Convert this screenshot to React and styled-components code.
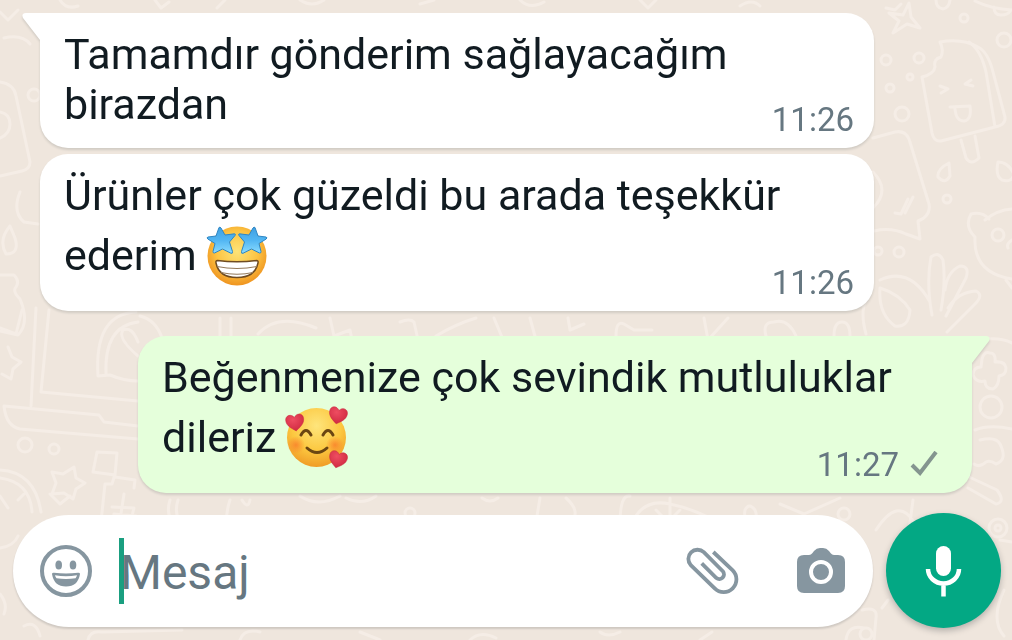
import React, { useState } from 'react'
import styled, { createGlobalStyle } from 'styled-components'

const GlobalStyle = createGlobalStyle`
  * {
    box-sizing: border-box;
  }
  body {
    margin: 0;
    background: #efe6dd;
    font-family: Roboto, 'Liberation Sans', sans-serif;
    color: #111b21;
  }
`

const Page = styled.div`
  position: relative;
  isolation: isolate;
  min-height: 100vh;
  display: flex;
  flex-direction: column;
  justify-content: space-between;
  overflow: hidden;
`

const WallpaperSvg = styled.svg`
  position: absolute;
  inset: 0;
  z-index: -1;
  width: 100%;
  height: 100%;
  fill: none;
  stroke: #f5ede6;
  stroke-width: 3;
  stroke-linecap: round;
  stroke-linejoin: round;
`

const MessageList = styled.main`
  display: flex;
  flex-direction: column;
  gap: 6px;
  padding: 13px 40px 20px;
`

const Bubble = styled.article`
  position: relative;
  display: grid;
  padding: 16px 20px 12px 24px;
  border-radius: 28px;
  filter: drop-shadow(0 2px 1px rgba(11, 20, 26, 0.13));
  ${({ $out, $tail }) =>
    $out
      ? `
    background: #e5ffdb;
    color: #e5ffdb;
    margin: 19px 0 0 98px;
    padding-right: 34px;
    ${$tail ? 'border-top-right-radius: 0;' : ''}
  `
      : `
    background: #ffffff;
    color: #ffffff;
    margin-right: 98px;
    ${$tail ? 'border-top-left-radius: 0;' : ''}
  `}
`

const Tail = styled.svg`
  position: absolute;
  top: 0;
  width: 20px;
  height: 28px;
  fill: currentColor;
  ${({ $out }) => ($out ? 'right: -18px; transform: scaleX(-1);' : 'left: -18px;')}
`

const Text = styled.p`
  grid-area: 1 / 1;
  margin: 0 0 7px;
  font-size: 43px;
  line-height: 50px;
  color: #111b21;
`

const Meta = styled.footer`
  grid-area: 1 / 1;
  place-self: end;
  display: flex;
  align-items: center;
  gap: 11px;
  font-size: 33px;
  line-height: 32px;
  color: #667781;
`

const Emoji = styled.svg`
  width: 60px;
  height: 60px;
  margin: 6px 0;
  vertical-align: -22px;
  overflow: visible;
`

const Composer = styled.form`
  display: flex;
  align-items: center;
  gap: 13px;
  padding: 0 11px 12px 13px;
`

const InputPill = styled.div`
  flex: 1;
  min-width: 0;
  height: 112px;
  display: flex;
  align-items: center;
  padding: 0 27px 0 26px;
  border-radius: 56px;
  background: #ffffff;
  box-shadow: 0 2px 2px rgba(11, 20, 26, 0.14);
`

const IconButton = styled.button`
  flex: none;
  display: flex;
  padding: 0;
  border: 0;
  background: none;
  color: #8696a0;
  cursor: pointer;
  & + & {
    margin-left: 56px;
  }
`

const Caret = styled.span`
  flex: none;
  width: 5px;
  height: 66px;
  margin: 0 -4px 0 26px;
  background: #1a9f80;
`

const MessageInput = styled.input`
  flex: 1;
  min-width: 0;
  padding: 4px 0 0;
  border: 0;
  outline: 0;
  background: none;
  font-family: inherit;
  font-size: 48px;
  line-height: 60px;
  color: #111b21;
  &::placeholder {
    color: #667781;
    opacity: 1;
  }
`

const MicButton = styled.button`
  flex: none;
  width: 115px;
  height: 115px;
  display: grid;
  place-items: center;
  padding: 0;
  border: 0;
  border-radius: 50%;
  background: #03a884;
  color: #ffffff;
  box-shadow: 0 3px 6px rgba(11, 20, 26, 0.25);
  cursor: pointer;
`

const Wallpaper = () => (
  <WallpaperSvg viewBox="0 0 1012 640" preserveAspectRatio="xMidYMid slice" aria-hidden="true">
    {/* top edge */}
    <path d="M0 12l8 8 10-10M4 38q18-4 26 6M60 0q6 10 18 6M155 0l6 8 8-6M225 0l-8 8M300 0q12 8 24 0M420 4l14-4M520 0q10 10 24 2M640 0l8 8 8-8M740 6q12-8 20 0" />
    <path d="M886 8l9 2 6-6M893 33l6-12-10-8 14 2 6-12 2 14 9 11-13-4zM936 0q0 8 7 9 6-1 7-9M975 1q16 8 37 9M994 7q0 8 7 8t9-4" />
    <circle cx="964" cy="18" r="4" />
    <circle cx="1004" cy="40" r="7" />
    <circle cx="886" cy="60" r="5" />
    <circle cx="919" cy="58" r="5" />
    <circle cx="910" cy="77" r="3" />
    <circle cx="890" cy="88" r="4" />
    <circle cx="902" cy="114" r="7" />
    {/* ice lolly */}
    <path d="M940 42q22-4 38 5 10 5 15 25l12 45q1 8-10 10l-54 14q-7 1-9-8l-10-56q12-3 13-10-2-8 6-10 3-7-1-15zM969 42q12 8 17 30l9 55M961 140l5 18q5 8 13 0l-4-22" />
    <path d="M940 86l8 3-7 4M971 80l-6 4 8 2M950 107l20-1q2 14-6 15-8 0-9-12" />
    {/* speech card */}
    <path d="M873 138l22-6q10-2 14 7l20 65q2 12-11 17l2 18-14-5q-15-7-32-3M873 172q18 18 0 36M895 213l6 1 7-15M905 213l8-16" />
    <path d="M949 163q-12 6-11 14 7 8 12-1zM998 162q-3 14 4 18 10 3 12-6-6-12-16-12z" />
    <circle cx="947" cy="199" r="4" />
    <circle cx="899" cy="252" r="5" />
    <circle cx="878" cy="251" r="4" />
    {/* bear */}
    <path d="M989 219q-7-8-18-5-7 12 4 23-2 36 37 42M985 220q12-10 27-11M1006 280l6 8M1012 240q-6 4-4 8" />
    <circle cx="998" cy="235" r="6" />
    {/* leaves */}
    <path d="M932 315q-6-32-1-58 8-6 12 3 3 22-2 50M945 290q2-18 15-24 10 0 6 12l-20 38M948 308q10-16 28-17 8 4-1 13l-28 28M880 280q30-14 50 22M880 288q-2 26 15 38 14 2 15-16-10-16-30-22zM866 300q-6 12 0 34" />
    {/* left side */}
    <path d="M0 82q14 2 16 14l14 66q0 7-8 9l-22 5M0 112q10 2 10 12t-10 14M20 192q-8 20 4 30l14 2M10 226q-12 14-4 28 14 0 9-16zM0 275h14q6 6 2 12-4 4 4 12 10 24-2 36l-18-4" />
    <circle cx="34" cy="95" r="6" />
    <path d="M8 347l4 10 9 5-8 7-2 10-9-5M22 310l-6 24-16-6M36 308l-5 98M49 310l-8 82 97 9M4 406l95 9 5 7 34 4M4 406q2 20 16 23l118 10" />
    <path d="M98 376q-4-62 38-64M106 374q-2-48 32-52M98 376l12-1q14 6 28 6M138 342q-6-16-15-12-6 8 15 26" />
    <circle cx="25" cy="445" r="7" />
    <circle cx="54" cy="449" r="5" />
    <path d="M74 467l2 11 9 5-9 6-3 10-9-6-12 1 4-11-4-11 11 2zM97 452l20 1-2 22-22-3zM115 474l-3 10h-7l-4 38M115 477l20 3-1 8M112 507l22 1-3 12" />
    <path d="M0 470q35 2 41 42M0 478q30 4 32 34M0 496l8 12M18 500l6-6" />
    {/* strip between the bubbles */}
    <path d="M220 318v20M231 318v20M258 334q20-22 58-6M330 318l4 18 16-6 2 10M400 322q10-4 14 0l4 18M436 336q20-12 40-18M494 318l10 24M530 318l6 22M568 318l2 12 14-6M616 336q0-16 8-12l10 6h18M704 318l4 22 20-22M766 336q-4-14 8-14 14-4 22 14M834 336q0-14 8-14t8 14" />
    <path d="M140 316q16 4 22 22" />
    {/* right of the outgoing bubble */}
    <path d="M988 339q14-1 24 4M982 359q2-8 8-6 6 0 5 9 10-1 11 6 0 7-7 8 0 10-6 13-8 0-8-8-9 2-12-6 0-8 8-8zM975 430q14-6 37-1M980 440q16-4 20 4 8 16-4 20-6-4-10-2-6 6-12 2M968 488l28 16q10-2 1-14l-30-14" />
    <circle cx="991" cy="407" r="11" />
    {/* strip above the composer */}
    <path d="M50 494l10 10 10-8M124 494l-4 26M112 526l2-12 22 2-2 10M170 500q-4 12 2 24M178 500q-4 12 2 24M230 500q-4 12-4 26M300 496q18 12 40 0M346 498q16 8 30-2M242 500q6 10 8 0M482 498q8 6 16 0M540 498l-4 24M566 498q16 14 4 26M620 524q0-30 10-28M632 524q10-26 38-20t50 20M670 526v-28M656 510l12 12 12-12M745 510q4-8 10 0 4 10-4 10-8 0-6-10zM780 504l24 10 36-16M876 530q22-34 38-8M913 500l-4 30" />
    <circle cx="410" cy="513" r="5" />
    <circle cx="844" cy="514" r="6" />
    {/* around and below the composer */}
    <path d="M0 548q14-2 18-12M0 594q8 10 4 20M24 626q12-6 16 10M88 640q2-10 14-8l80-2M240 640q4-12 20-8M360 632l20 8M470 640q10-10 26-2M600 632q8 6 20 0M700 640l12-8M862 610q16-4 14 8l-2 22M846 640q2-16 18-12M888 600l-6 8M1000 540l12 2M1004 590q-14 30 0 46" />
    <circle cx="998" cy="528" r="9" />
    <circle cx="998" cy="528" r="3" />
    <circle cx="866" cy="634" r="6" />
  </WallpaperSvg>
)

const Star = () => (
  <path
    d="M12 1.5Q13 .6 14 2l4 7 9.500-1.200Q29 8 28 9.500L22.500 16l3 9.500Q25.800 28 24 27.300L15.500 23 7.500 27Q5.800 27.300 6 25.500L8 17.500.8 13Q-.8 11.600 1 11l8-1z"
    fill="url(#starFill)"
    stroke="#2e86c4"
    strokeWidth="1"
    strokeLinejoin="round"
  />
)

const StarStruck = () => (
  <Emoji viewBox="0 0 60 60" role="img" aria-label="🤩">
    <defs>
      <radialGradient id="struckFace" cx="50%" cy="42%" r="58%">
        <stop offset="0" stopColor="#fde378" />
        <stop offset="0.6" stopColor="#fcc443" />
        <stop offset="1" stopColor="#ef9420" />
      </radialGradient>
      <linearGradient id="starFill" x1="0" y1="0" x2="0" y2="1">
        <stop offset="0" stopColor="#3f9fe0" />
        <stop offset="0.5" stopColor="#52b6f3" />
        <stop offset="1" stopColor="#8bdcff" />
      </linearGradient>
    </defs>
    <circle cx="30" cy="30" r="29.500" fill="url(#struckFace)" />
    <Star />
    <g transform="translate(60 0) scale(-1 1)">
      <Star />
    </g>
    <path
      d="M10.500 34.500Q30 37 49.500 34.500q2 0 1.500 2.500Q48 51.500 30 51.500T9 37q-.5-2.500 1.500-2.500z"
      fill="#fff"
      stroke="#6e4b22"
      strokeWidth="1.500"
    />
    <path d="M10 40.500Q30 44.500 50 40.500M14 46.500Q30 50 46 46.500" fill="none" stroke="#93795a" strokeWidth="1" />
  </Emoji>
)

const Heart = ({ x, y, angle }) => (
  <path
    transform={`translate(${x} ${y}) rotate(${angle})`}
    d="M0 9C-4 6-9 3-9-2.500-9-8-2.500-9 0-4.500 2.500-9 9-8 9-2.500 9 3 4 6 0 9z"
    fill="url(#heartFill)"
    stroke="#c9283f"
    strokeWidth="0.500"
  />
)

const SmilingHearts = () => (
  <Emoji viewBox="0 0 60 60" role="img" aria-label="🥰">
    <defs>
      <radialGradient id="loveFace" cx="50%" cy="30%" r="70%">
        <stop offset="0" stopColor="#fee57c" />
        <stop offset="0.600" stopColor="#fcc840" />
        <stop offset="1" stopColor="#f09c26" />
      </radialGradient>
      <radialGradient id="cheek">
        <stop offset="0" stopColor="#f9812c" stopOpacity="0.850" />
        <stop offset="1" stopColor="#f9812c" stopOpacity="0" />
      </radialGradient>
      <radialGradient id="heartFill" cx="40%" cy="30%" r="75%">
        <stop offset="0" stopColor="#ee4d61" />
        <stop offset="1" stopColor="#cf2840" />
      </radialGradient>
    </defs>
    <circle cx="29.500" cy="29.500" r="29.500" fill="url(#loveFace)" />
    <circle cx="9" cy="37" r="9" fill="url(#cheek)" />
    <circle cx="48" cy="37" r="9" fill="url(#cheek)" />
    <g fill="none" stroke="#6b4612" strokeLinecap="round">
      <path d="M14 27Q19 18 24 27M36 27Q41 18 46 27" strokeWidth="3" />
      <path d="M20 40Q30 49 40 40" strokeWidth="3" />
    </g>
    <Heart x={8} y={14} angle={-8} />
    <Heart x={51} y={7} angle={12} />
    <Heart x={51} y={51} angle={14} />
  </Emoji>
)

const SmileyIcon = () => (
  <svg width="54" height="54" viewBox="0 0 54 54" fill="currentColor" aria-hidden="true">
    <circle cx="27" cy="27" r="24" fill="none" stroke="currentColor" strokeWidth="4" />
    <ellipse cx="19.700" cy="21" rx="3.300" ry="4.500" />
    <ellipse cx="34" cy="21" rx="3.300" ry="4.500" />
    <path d="M13 30q0-1.500 2-1.300 12 1.600 24 0 2-.2 2 1.300Q39 42.500 27 42.500T13 30z" />
    <path d="M16 31.300q11 2 22 0-.3 1.700-1.500 3-9.500 1.600-19 0-1.200-1.300-1.500-3z" fill="#fff" />
  </svg>
)

const ClipIcon = () => (
  <svg width="54" height="50" viewBox="0 0 54 50" aria-hidden="true">
    <path
      d="M27.300 6L46.700 24.300A12.700 12.700 0 0 1 28.700 42.300L4.800 19.200A9.200 9.200 0 0 1 17.800 6.200L37 25.400A4.700 4.700 0 0 1 30.400 32L15.700 17.300"
      fill="none"
      stroke="currentColor"
      strokeWidth="3.800"
    />
  </svg>
)

const CameraIcon = () => (
  <svg width="50" height="48" viewBox="0 0 50 48" aria-hidden="true">
    <path
      d="M8 8h5q2 0 3.500-2l1.500-2q2.500-3 6-3h3q3.500 0 6 3l1.500 2q1.500 2 3.500 2h4q7 0 7 7v24q0 7-7 7H8q-7 0-7-7V15q0-7 7-7z"
      fill="currentColor"
    />
    <circle cx="25" cy="25" r="10" fill="none" stroke="#fff" strokeWidth="4" />
  </svg>
)

const MicIcon = () => (
  <svg width="42" height="52" viewBox="0 0 42 52" fill="none" stroke="currentColor" aria-hidden="true">
    <rect x="13" y="1" width="15" height="30" rx="7.500" fill="currentColor" stroke="none" />
    <path d="M5 24a15.500 14.500 0 0 0 31 0M20.500 38v13.500" strokeWidth="4.500" />
  </svg>
)

const CheckIcon = () => (
  <svg width="28" height="28" viewBox="0 0 28 28" role="img" aria-label="Gönderildi">
    <path d="M2 14l8 8L26 1" fill="none" stroke="#84958f" strokeWidth="4" />
  </svg>
)

const messages = [
  { text: 'Tamamdır gönderim sağlayacağım birazdan', time: '11:26', tail: true },
  { text: 'Ürünler çok güzeldi bu arada teşekkür ederim ', emoji: <StarStruck />, time: '11:26' },
  {
    text: 'Beğenmenize çok sevindik mutluluklar dileriz ',
    emoji: <SmilingHearts />,
    time: '11:27',
    tail: true,
    out: true,
  },
]

const Message = ({ text, emoji, time, tail, out }) => (
  <Bubble $out={out} $tail={tail}>
    {tail && (
      <Tail $out={out} viewBox="0 0 20 28" aria-hidden="true">
        <path d="M20 0H4Q-1 0 1 5L18 27V28H20z" />
      </Tail>
    )}
    <Text>
      {text}
      {emoji}
    </Text>
    <Meta>
      <time>{time}</time>
      {out && <CheckIcon />}
    </Meta>
  </Bubble>
)

const App = () => {
  const [draft, setDraft] = useState('')

  return (
    <Page>
      <GlobalStyle />
      <Wallpaper />
      <MessageList>
        {messages.map((message) => (
          <Message key={message.text} {...message} />
        ))}
      </MessageList>
      <Composer onSubmit={(e) => e.preventDefault()}>
        <InputPill>
          <IconButton type="button" aria-label="Emoji">
            <SmileyIcon />
          </IconButton>
          {!draft && <Caret />}
          <MessageInput
            aria-label="Mesaj"
            placeholder="Mesaj"
            value={draft}
            onChange={(e) => setDraft(e.target.value)}
          />
          <IconButton type="button" aria-label="Dosya ekle">
            <ClipIcon />
          </IconButton>
          <IconButton type="button" aria-label="Kamera">
            <CameraIcon />
          </IconButton>
        </InputPill>
        <MicButton type="button" aria-label="Sesli mesaj">
          <MicIcon />
        </MicButton>
      </Composer>
    </Page>
  )
}

export default App
